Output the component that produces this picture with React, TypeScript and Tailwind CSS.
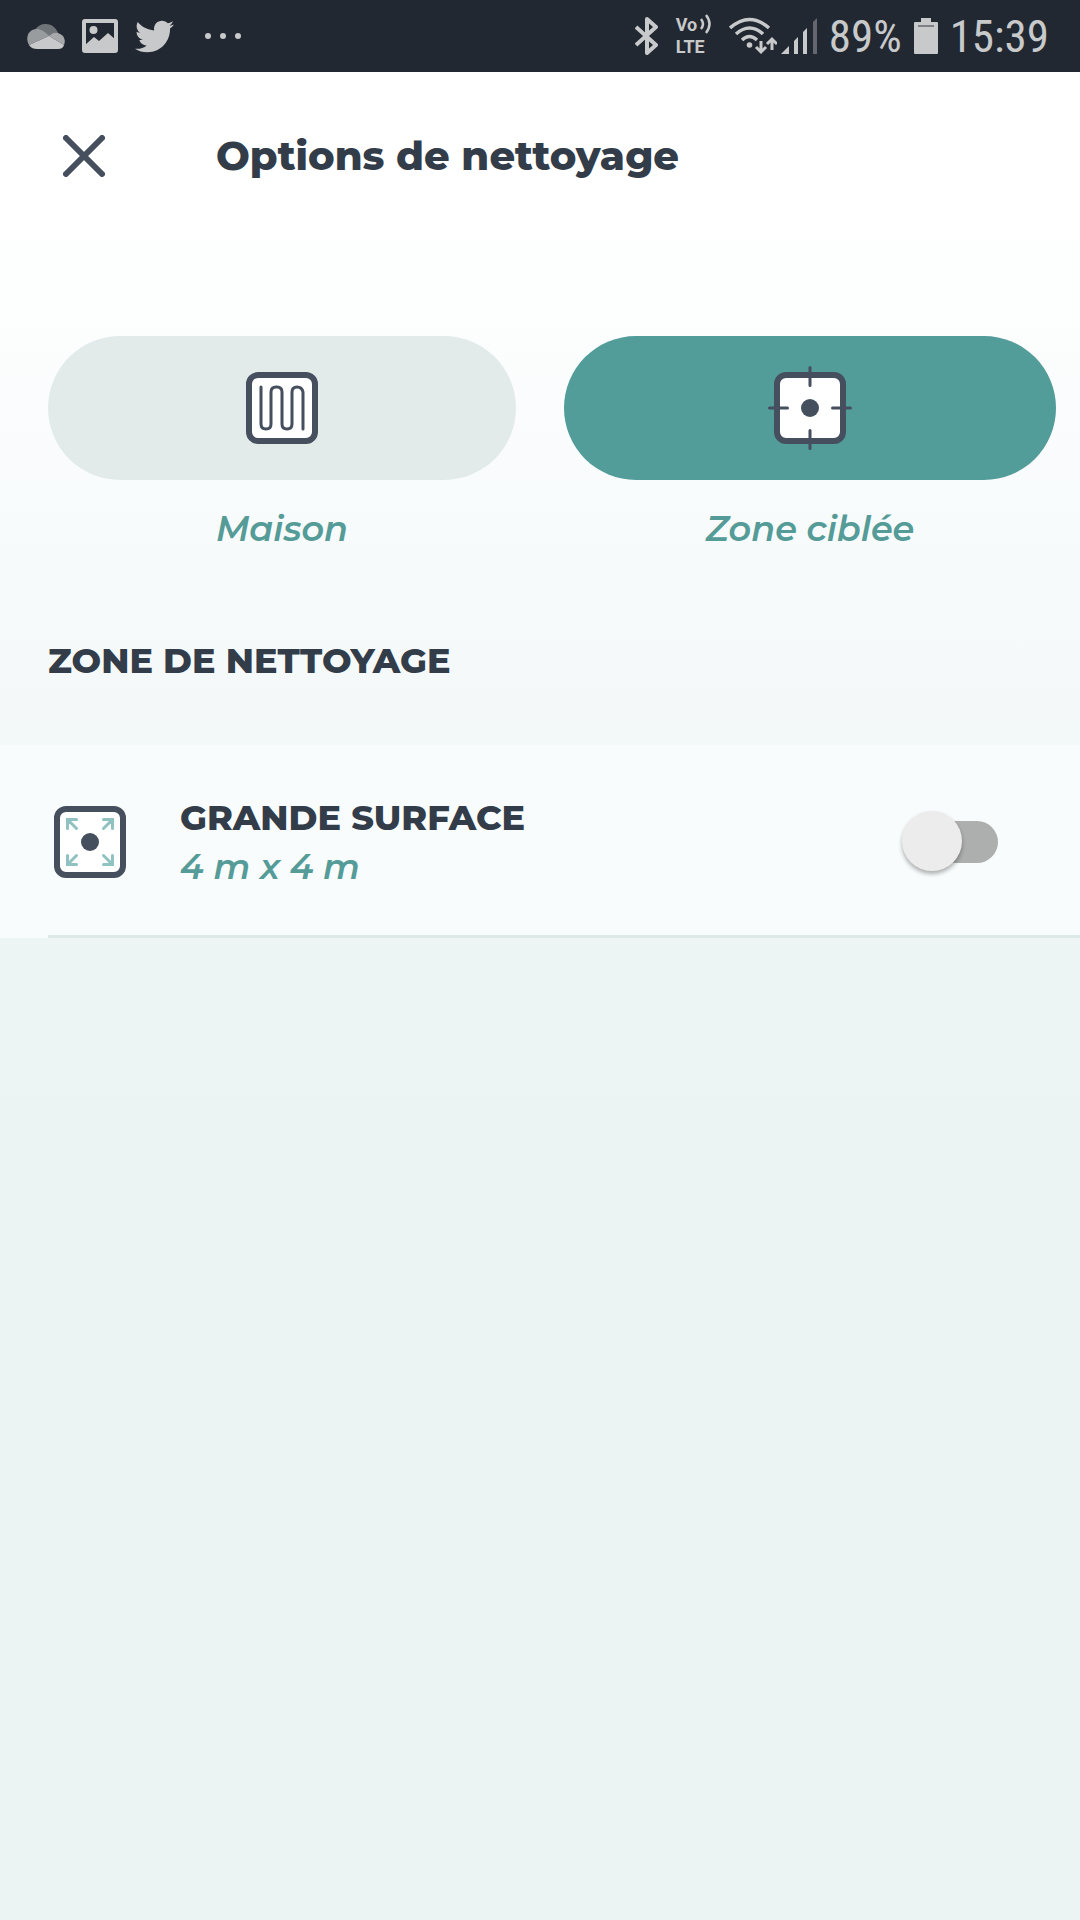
import { useState } from "react";
import type { ReactNode } from "react";
import { FaTwitter } from "react-icons/fa";

type Mode = "house" | "spot";

type ModeButtonProps = {
  label: string;
  selected: boolean;
  className: string;
  onClick: () => void;
  children: ReactNode;
};

function CloudIcon() {
  return (
    <svg width="38" height="25" viewBox="0 0 38 25" aria-hidden="true">
      <path d="M8 6C11 1 15 0 19 0c6 0 10 4 12 9l-9 4z" fill="#6f7478" />
      <path d="M2 21C-2 14 1 5 10 5c4 0 7 2 12 7L2 21z" fill="#999c9f" />
      <path d="M22 12c3-3 6-4 9-3 6 2 8 7 6 12z" fill="#a6a8aa" />
      <path d="M22 12 2 21c2 3 5 4 8 4h21c3 0 5-1 6-4z" fill="#c8c9cb" />
    </svg>
  );
}

function PictureIcon() {
  return (
    <svg width="36" height="34" viewBox="0 0 36 34" aria-hidden="true">
      <rect x="2" y="2" width="32" height="30" rx="1" fill="none" stroke="#c8c9cb" strokeWidth="4" />
      <circle cx="11.500" cy="11" r="4" fill="#c8c9cb" />
      <path d="M3 26 12 18l5 4 9-8 8 7v11H3z" fill="#c8c9cb" />
    </svg>
  );
}

function BluetoothIcon() {
  return (
    <svg width="24" height="38" viewBox="0 0 24 38" fill="none" stroke="#c8c9cb" strokeWidth="4" aria-hidden="true">
      <path d="M1 10 21 28 12 36V2l9 8L1 28" strokeLinejoin="round" />
    </svg>
  );
}

function VolteIcon() {
  return (
    <div className="relative w-9 font-['Roboto',sans-serif] text-[18px] leading-[22px] font-bold">
      <div>Vo</div>
      <div>LTE</div>
      <svg
        width="12"
        height="20"
        viewBox="0 0 12 20"
        fill="none"
        stroke="#c8c9cb"
        strokeWidth="2.500"
        className="absolute top-0 right-0"
        aria-hidden="true"
      >
        <path d="M1 5q4 5 0 10M6 1q7 9 0 18" />
      </svg>
    </div>
  );
}

function WifiIcon() {
  return (
    <svg width="48" height="38" viewBox="0 0 48 38" fill="none" stroke="#c8c9cb" strokeWidth="3.500" aria-hidden="true">
      <path d="M1 11q19.500-17 39 0M7 17q13.500-12 27 0M13 23q7.500-7 15 0" />
      <circle cx="20.500" cy="28" r="2.800" fill="#c8c9cb" stroke="none" />
      <path d="M32 24v11M27 30l5 5 5-5M43 33V22M38 27l5-5 5 5" strokeWidth="3" />
    </svg>
  );
}

function SignalIcon() {
  return (
    <svg width="36" height="36" viewBox="0 0 36 36" fill="#c8c9cb" aria-hidden="true">
      <path d="M0 36l8-8v8zM13 23l4-4v17h-4zM22 14l4-4v26h-4z" />
      <path d="M32 4l4-4v36h-4z" fill="#64686e" />
    </svg>
  );
}

function BatteryIcon() {
  return (
    <svg width="24" height="36" viewBox="0 0 24 36" aria-hidden="true">
      <path d="M7 0h10v4h6q1 0 1 1v30q0 1-1 1H1q-1 0-1-1V5q0-1 1-1h6z" fill="#c8c9cb" />
      <path d="M4 8h16" stroke="#64686e" strokeWidth="1.500" />
    </svg>
  );
}

function StatusBar() {
  return (
    <div className="flex h-[72px] items-center justify-between bg-[#222831] pr-[31px] pl-[27px] font-['Roboto_Condensed','Roboto',sans-serif] text-[#c8c9cb]">
      <div className="flex items-center gap-[17px]">
        <CloudIcon />
        <PictureIcon />
        <FaTwitter size={39} aria-hidden="true" />
        <svg width="64" height="8" viewBox="0 0 64 8" fill="#c8c9cb" aria-hidden="true">
          <circle cx="17" cy="4" r="3" />
          <circle cx="32" cy="4" r="3" />
          <circle cx="47" cy="4" r="3" />
        </svg>
      </div>
      <div className="flex items-center">
        <div className="flex items-center gap-[17px]">
          <BluetoothIcon />
          <VolteIcon />
          <WifiIcon />
        </div>
        <div className="ml-1 flex items-center gap-3">
          <SignalIcon />
          <span className="text-[45px] leading-none">89%</span>
          <BatteryIcon />
          <span className="text-[45px] leading-none">15:39</span>
        </div>
      </div>
    </div>
  );
}

function HouseIcon() {
  return (
    <svg width="84" height="84" viewBox="0 0 84 84" aria-hidden="true">
      <rect x="9" y="9" width="66" height="66" rx="9" fill="#fff" stroke="#454f5e" strokeWidth="6" />
      <path
        d="M21 21v37q0 5 5 5t5-5V26q0-5 5-5h1q5 0 5 5v32q0 5 5 5t5-5V26q0-5 5-5t6 5v37"
        fill="none"
        stroke="#454f5e"
        strokeWidth="3"
        strokeLinecap="round"
      />
    </svg>
  );
}

function SpotIcon() {
  return (
    <svg width="84" height="84" viewBox="0 0 84 84" stroke="#454f5e" strokeLinecap="round" aria-hidden="true">
      <rect x="9" y="9" width="66" height="66" rx="9" fill="#fff" strokeWidth="6" />
      <path d="M42 1.500v18M42 64.500v18M1.500 42h18M64.500 42h18" strokeWidth="3" />
      <circle cx="42" cy="42" r="9" fill="#454f5e" stroke="none" />
    </svg>
  );
}

function LargeAreaIcon() {
  return (
    <svg width="72" height="72" viewBox="0 0 72 72" aria-hidden="true">
      <rect x="3" y="3" width="66" height="66" rx="9" fill="#fff" stroke="#454f5e" strokeWidth="6" />
      <circle cx="36" cy="36" r="9" fill="#454f5e" />
      <path
        d="M13.500 22.500v-9h9M13.500 13.500l9 9M49.500 13.500h9v9M58.500 13.500l-9 9M13.500 49.500v9h9M13.500 58.500l9-9M49.500 58.500h9v-9M58.500 58.500l-9-9"
        fill="none"
        stroke="#8fc2c1"
        strokeWidth="3"
        strokeLinecap="round"
      />
    </svg>
  );
}

function ModeButton({ label, selected, className, onClick, children }: ModeButtonProps) {
  return (
    <button type="button" aria-pressed={selected} onClick={onClick} className={className}>
      <span
        className={
          selected
            ? "flex h-36 items-center justify-center rounded-full bg-[#529c9a]"
            : "flex h-36 items-center justify-center rounded-full bg-[#e2ebea]"
        }
      >
        {children}
      </span>
      <span className="mt-6 block text-[35px] leading-[50px] font-semibold text-[#559b98] italic">{label}</span>
    </button>
  );
}

export default function App() {
  const [mode, setMode] = useState<Mode>("spot");
  const [largeArea, setLargeArea] = useState(false);

  return (
    <div className="min-h-screen bg-linear-to-b from-[#eff6f6] from-40% to-[#ebf4f3] to-60% font-['Montserrat','Inter',sans-serif] text-[#333d4a]">
      <StatusBar />

      <div className="bg-linear-to-b from-white from-20% to-[#f3f8f9]">
        <header className="flex h-42 items-center px-12">
          <button type="button" aria-label="Fermer" className="flex size-18 items-center justify-center">
            <svg width="42" height="42" viewBox="0 0 42 42" stroke="#454f5e" strokeWidth="6" strokeLinecap="round" aria-hidden="true">
              <path d="M3 3l36 36M39 3 3 39" />
            </svg>
          </button>
          <h1 className="ml-24 text-[40px] leading-none font-extrabold">Options de nettoyage</h1>
        </header>

        <div className="grid grid-cols-2 pt-24">
          <ModeButton label="Maison" selected={mode === "house"} className="pr-6 pl-12" onClick={() => setMode("house")}>
            <HouseIcon />
          </ModeButton>
          <ModeButton label="Zone ciblée" selected={mode === "spot"} className="px-6" onClick={() => setMode("spot")}>
            <SpotIcon />
          </ModeButton>
        </div>

        <h2 className="px-12 pt-[82px] pb-[59px] text-[35px] leading-[50px] font-extrabold">ZONE DE NETTOYAGE</h2>
      </div>

      <section className="bg-[#f8fcfd] pl-12">
        <div className="flex items-center border-b-3 border-[#dde9e7] pt-12 pr-[82px] pb-11 pl-[6px]">
          <LargeAreaIcon />
          <label htmlFor="large-area" className="ml-[54px] flex-1 text-[35px] leading-[49px] font-extrabold">
            GRANDE SURFACE
            <span className="block font-semibold text-[#559b98] italic">4 m x 4 m</span>
          </label>
          <input
            id="large-area"
            type="checkbox"
            role="switch"
            checked={largeArea}
            onChange={(e) => setLargeArea(e.target.checked)}
            className="relative h-[42px] w-[84px] appearance-none rounded-full bg-[#adafae] before:absolute before:-top-[10px] before:-left-3 before:size-[60px] before:rounded-full before:bg-[#ececec] before:shadow-[0_3px_4px_rgba(0,0,0,0.3)] checked:bg-[#9cc9c7] checked:before:left-9 checked:before:bg-[#529c9a]"
          />
        </div>
      </section>
    </div>
  );
}
